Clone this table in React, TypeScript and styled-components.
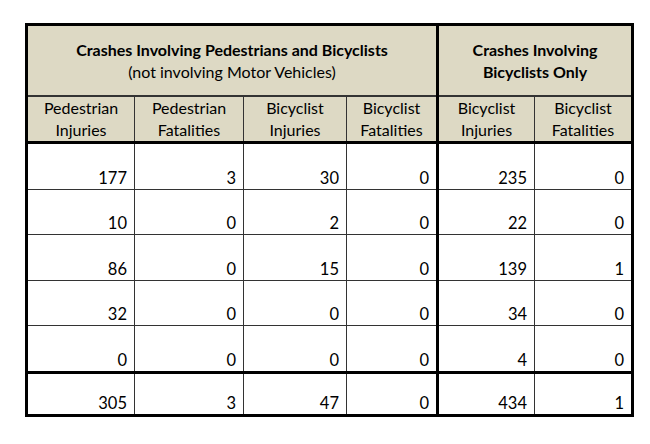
import React from 'react';
import styled, { createGlobalStyle } from 'styled-components';

const GlobalStyle = createGlobalStyle`
  body {
    margin: 0;
    background: #ffffff;
    font-family: Lato, "Open Sans", sans-serif;
    color: #000;
  }
`;

const Page = styled.div`
  padding: 23px 0 0 25px;
`;

const Table = styled.table`
  border-collapse: collapse;
  table-layout: fixed;
  width: 606px;
  border: 3px solid #000;
  font-size: 16px;
`;

const HeadCell = styled.th<{ $thickRight?: boolean; $thickBottom?: boolean; $height: number }>`
  background: #ddd9c4;
  height: ${p => p.$height}px;
  padding: 0 2px;
  text-align: center;
  vertical-align: middle;
  font-weight: 400;
  line-height: 22px;
  border-left: 1px solid #333;
  border-right: ${p => (p.$thickRight ? '3px solid #000' : '1px solid #333')};
  border-bottom: ${p => (p.$thickBottom ? '3px solid #000' : '2px solid #333')};
`;

const Title = styled.div`
  font-weight: 700;
`;

const Cell = styled.td<{ $thickRight?: boolean; $total?: boolean }>`
  height: ${p => (p.$total ? 39 : 43.5)}px;
  padding: 0 7px 1px 0;
  text-align: right;
  vertical-align: bottom;
  line-height: 20px;
  font-size: 16.5px;
  border-left: 1px solid #333;
  border-right: ${p => (p.$thickRight ? '3px solid #000' : '1px solid #333')};
  border-top: ${p => (p.$total ? '3px solid #000' : '1px solid #333')};
  border-bottom: 1px solid #333;
`;

const widths = [108, 109, 103, 91, 97, 98];

const subHeads = [
  ['Pedestrian', 'Injuries'],
  ['Pedestrian', 'Fatalities'],
  ['Bicyclist', 'Injuries'],
  ['Bicyclist', 'Fatalities'],
  ['Bicyclist', 'Injuries'],
  ['Bicyclist', 'Fatalities'],
];

const rows = [
  [177, 3, 30, 0, 235, 0],
  [10, 0, 2, 0, 22, 0],
  [86, 0, 15, 0, 139, 1],
  [32, 0, 0, 0, 34, 0],
  [0, 0, 0, 0, 4, 0],
];

const totals = [305, 3, 47, 0, 434, 1];

const App: React.FC = () => (
  <Page>
    <GlobalStyle />
    <Table>
      <colgroup>
        {widths.map((w, i) => (
          <col key={i} style={{ width: w }} />
        ))}
      </colgroup>
      <thead>
        <tr>
          <HeadCell colSpan={4} $thickRight $height={69}>
            <Title>Crashes Involving Pedestrians and Bicyclists</Title>
            <div>(not involving Motor Vehicles)</div>
          </HeadCell>
          <HeadCell colSpan={2} $height={69}>
            <Title>Crashes Involving</Title>
            <Title>Bicyclists Only</Title>
          </HeadCell>
        </tr>
        <tr>
          {subHeads.map((h, i) => (
            <HeadCell key={i} $thickRight={i === 3} $thickBottom $height={39}>
              {h[0]}
              <br />
              {h[1]}
            </HeadCell>
          ))}
        </tr>
      </thead>
      <tbody>
        {rows.map((r, ri) => (
          <tr key={ri}>
            {r.map((v, i) => (
              <Cell key={i} $thickRight={i === 3}>{v}</Cell>
            ))}
          </tr>
        ))}
        <tr>
          {totals.map((v, i) => (
            <Cell key={i} $thickRight={i === 3} $total>{v}</Cell>
          ))}
        </tr>
      </tbody>
    </Table>
  </Page>
);

export default App;
